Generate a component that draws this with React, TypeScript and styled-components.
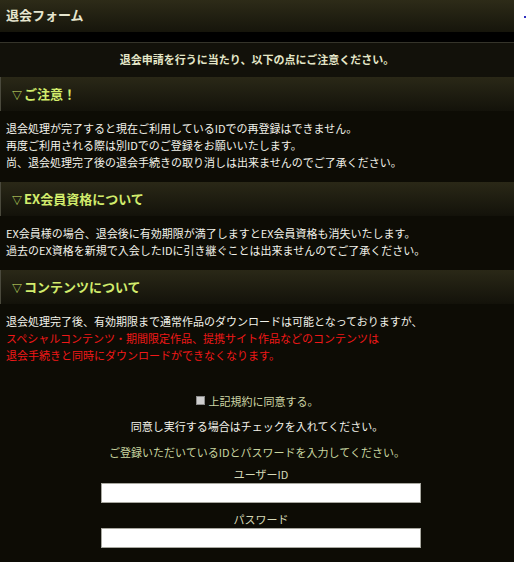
import React from "react";
import styled, { createGlobalStyle } from "styled-components";

const GlobalStyle = createGlobalStyle`
  html, body {
    margin: 0;
    padding: 0;
    background: #ffffff;
  }
  body {
    font-family: "Noto Sans CJK JP", "Noto Sans", sans-serif;
    font-size: 11px;
  }
`;

const sections = [
  {
    title: "ご注意！",
    lines: [
      { text: "退会処理が完了すると現在ご利用しているIDでの再登録はできません。" },
      { text: "再度ご利用される際は別IDでのご登録をお願いいたします。" },
      { text: "尚、退会処理完了後の退会手続きの取り消しは出来ませんのでご了承ください。" },
    ],
  },
  {
    title: "EX会員資格について",
    lines: [
      { text: "EX会員様の場合、退会後に有効期限が満了しますとEX会員資格も消失いたします。" },
      { text: "過去のEX資格を新規で入会したIDに引き継ぐことは出来ませんのでご了承ください。" },
    ],
  },
  {
    title: "コンテンツについて",
    lines: [
      { text: "退会処理完了後、有効期限まで通常作品のダウンロードは可能となっておりますが、" },
      { text: "スペシャルコンテンツ・期間限定作品、提携サイト作品などのコンテンツは", warn: true },
      { text: "退会手続きと同時にダウンロードができなくなります。", warn: true },
    ],
  },
];

export default function App() {
  const [agreed, setAgreed] = React.useState(false);

  return (
    <>
      <GlobalStyle />
      <Page>
        <Main>
          <TitleBar>退会フォーム</TitleBar>
          <Gap />
          <Intro>退会申請を行うに当たり、以下の点にご注意ください。</Intro>

          {sections.map((section) => (
            <React.Fragment key={section.title}>
              <SectionHead>
                <Marker>▽</Marker>
                {section.title}
              </SectionHead>
              <SectionBody>
                {section.lines.map((line) => (
                  <Line key={line.text} $warn={line.warn}>
                    {line.text}
                  </Line>
                ))}
              </SectionBody>
            </React.Fragment>
          ))}

          <FormArea>
            <AgreeRow>
              <Check
                type="checkbox"
                checked={agreed}
                onChange={(e) => setAgreed(e.target.checked)}
              />
              上記規約に同意する。
            </AgreeRow>
            <FormNote>同意し実行する場合はチェックを入れてください。</FormNote>
            <FormNote $tone="green">
              ご登録いただいているIDとパスワードを入力してください。
            </FormNote>
            <Fields>
              <FieldLabel>ユーザーID</FieldLabel>
              <TextInput type="text" />
              <FieldLabel $gap>パスワード</FieldLabel>
              <TextInput type="password" />
            </Fields>
          </FormArea>
        </Main>
        <Side>
          <SideDot />
        </Side>
      </Page>
    </>
  );
}

// styled-components

const Page = styled.div`
  display: flex;
  align-items: flex-start;
  width: 526px;
  height: 562px;
  overflow: hidden;
`;

const Main = styled.div`
  width: 514px;
  flex: none;
  background: #0d0c05;
  min-height: 562px;
`;

const Side = styled.div`
  flex: 1;
  padding: 16px 0 0 10px;
`;

const SideDot = styled.div`
  width: 2px;
  height: 2px;
  background: #3030c0;
`;

const TitleBar = styled.div`
  height: 32px;
  line-height: 30px;
  padding-left: 6px;
  background: linear-gradient(#2d2b18, #16150b);
  color: #e6e6cf;
  font-size: 13px;
  font-weight: bold;
`;

const Gap = styled.div`
  height: 10px;
  background: #000000;
  border-bottom: 1px solid #35342a;
`;

const Intro = styled.div`
  height: 34px;
  line-height: 32px;
  text-align: center;
  background: #12110a;
  color: #e4e6c8;
  font-size: 11px;
  font-weight: bold;
`;

const SectionHead = styled.div`
  height: 34px;
  line-height: 34px;
  padding-left: 11px;
  border-left: 1px solid #4a493c;
  background: linear-gradient(#2a2817, #13120a);
  color: #d2ec6c;
  font-size: 13px;
  font-weight: bold;
`;

const Marker = styled.span`
  display: inline-block;
  width: 12px;
  font-size: 10px;
  font-weight: normal;
`;

const SectionBody = styled.div`
  padding: 9px 6px 11px;
`;

const Line = styled.div<{ $warn?: boolean }>`
  line-height: 17px;
  color: ${(p) => (p.$warn ? "#f01818" : "#f2f2ea")};
  white-space: nowrap;
`;

const FormArea = styled.div`
  padding-top: 17px;
  text-align: center;
`;

const AgreeRow = styled.label`
  display: flex;
  align-items: center;
  justify-content: center;
  gap: 4px;
  height: 17px;
  margin-bottom: 9px;
  color: #cdd6a6;
`;

const Check = styled.input`
  appearance: none;
  width: 9px;
  height: 9px;
  margin: 0 0 1px;
  background: #cfcfcf;
  border: 1px solid #8c8c8c;

  &:checked {
    background: #7a7a7a;
  }
`;

const FormNote = styled.p<{ $tone?: "green" }>`
  margin: 0 0 ${(p) => (p.$tone === "green" ? "5px" : "9px")};
  line-height: 17px;
  color: ${(p) => (p.$tone === "green" ? "#c9d6a0" : "#f2f2ea")};
`;

const Fields = styled.div`
  display: flex;
  flex-direction: column;
  align-items: center;
  padding-left: 8px;
`;

const FieldLabel = styled.div<{ $gap?: boolean }>`
  margin-top: ${(p) => (p.$gap ? "8px" : "0")};
  line-height: 17px;
  color: #d6dab8;
`;

const TextInput = styled.input`
  box-sizing: border-box;
  width: 320px;
  height: 20px;
  margin: 0;
  padding: 1px 3px;
  border: 1px solid #a8a8a0;
  background: #ffffff;
  font-family: inherit;
  font-size: 11px;
  outline: none;
`;
